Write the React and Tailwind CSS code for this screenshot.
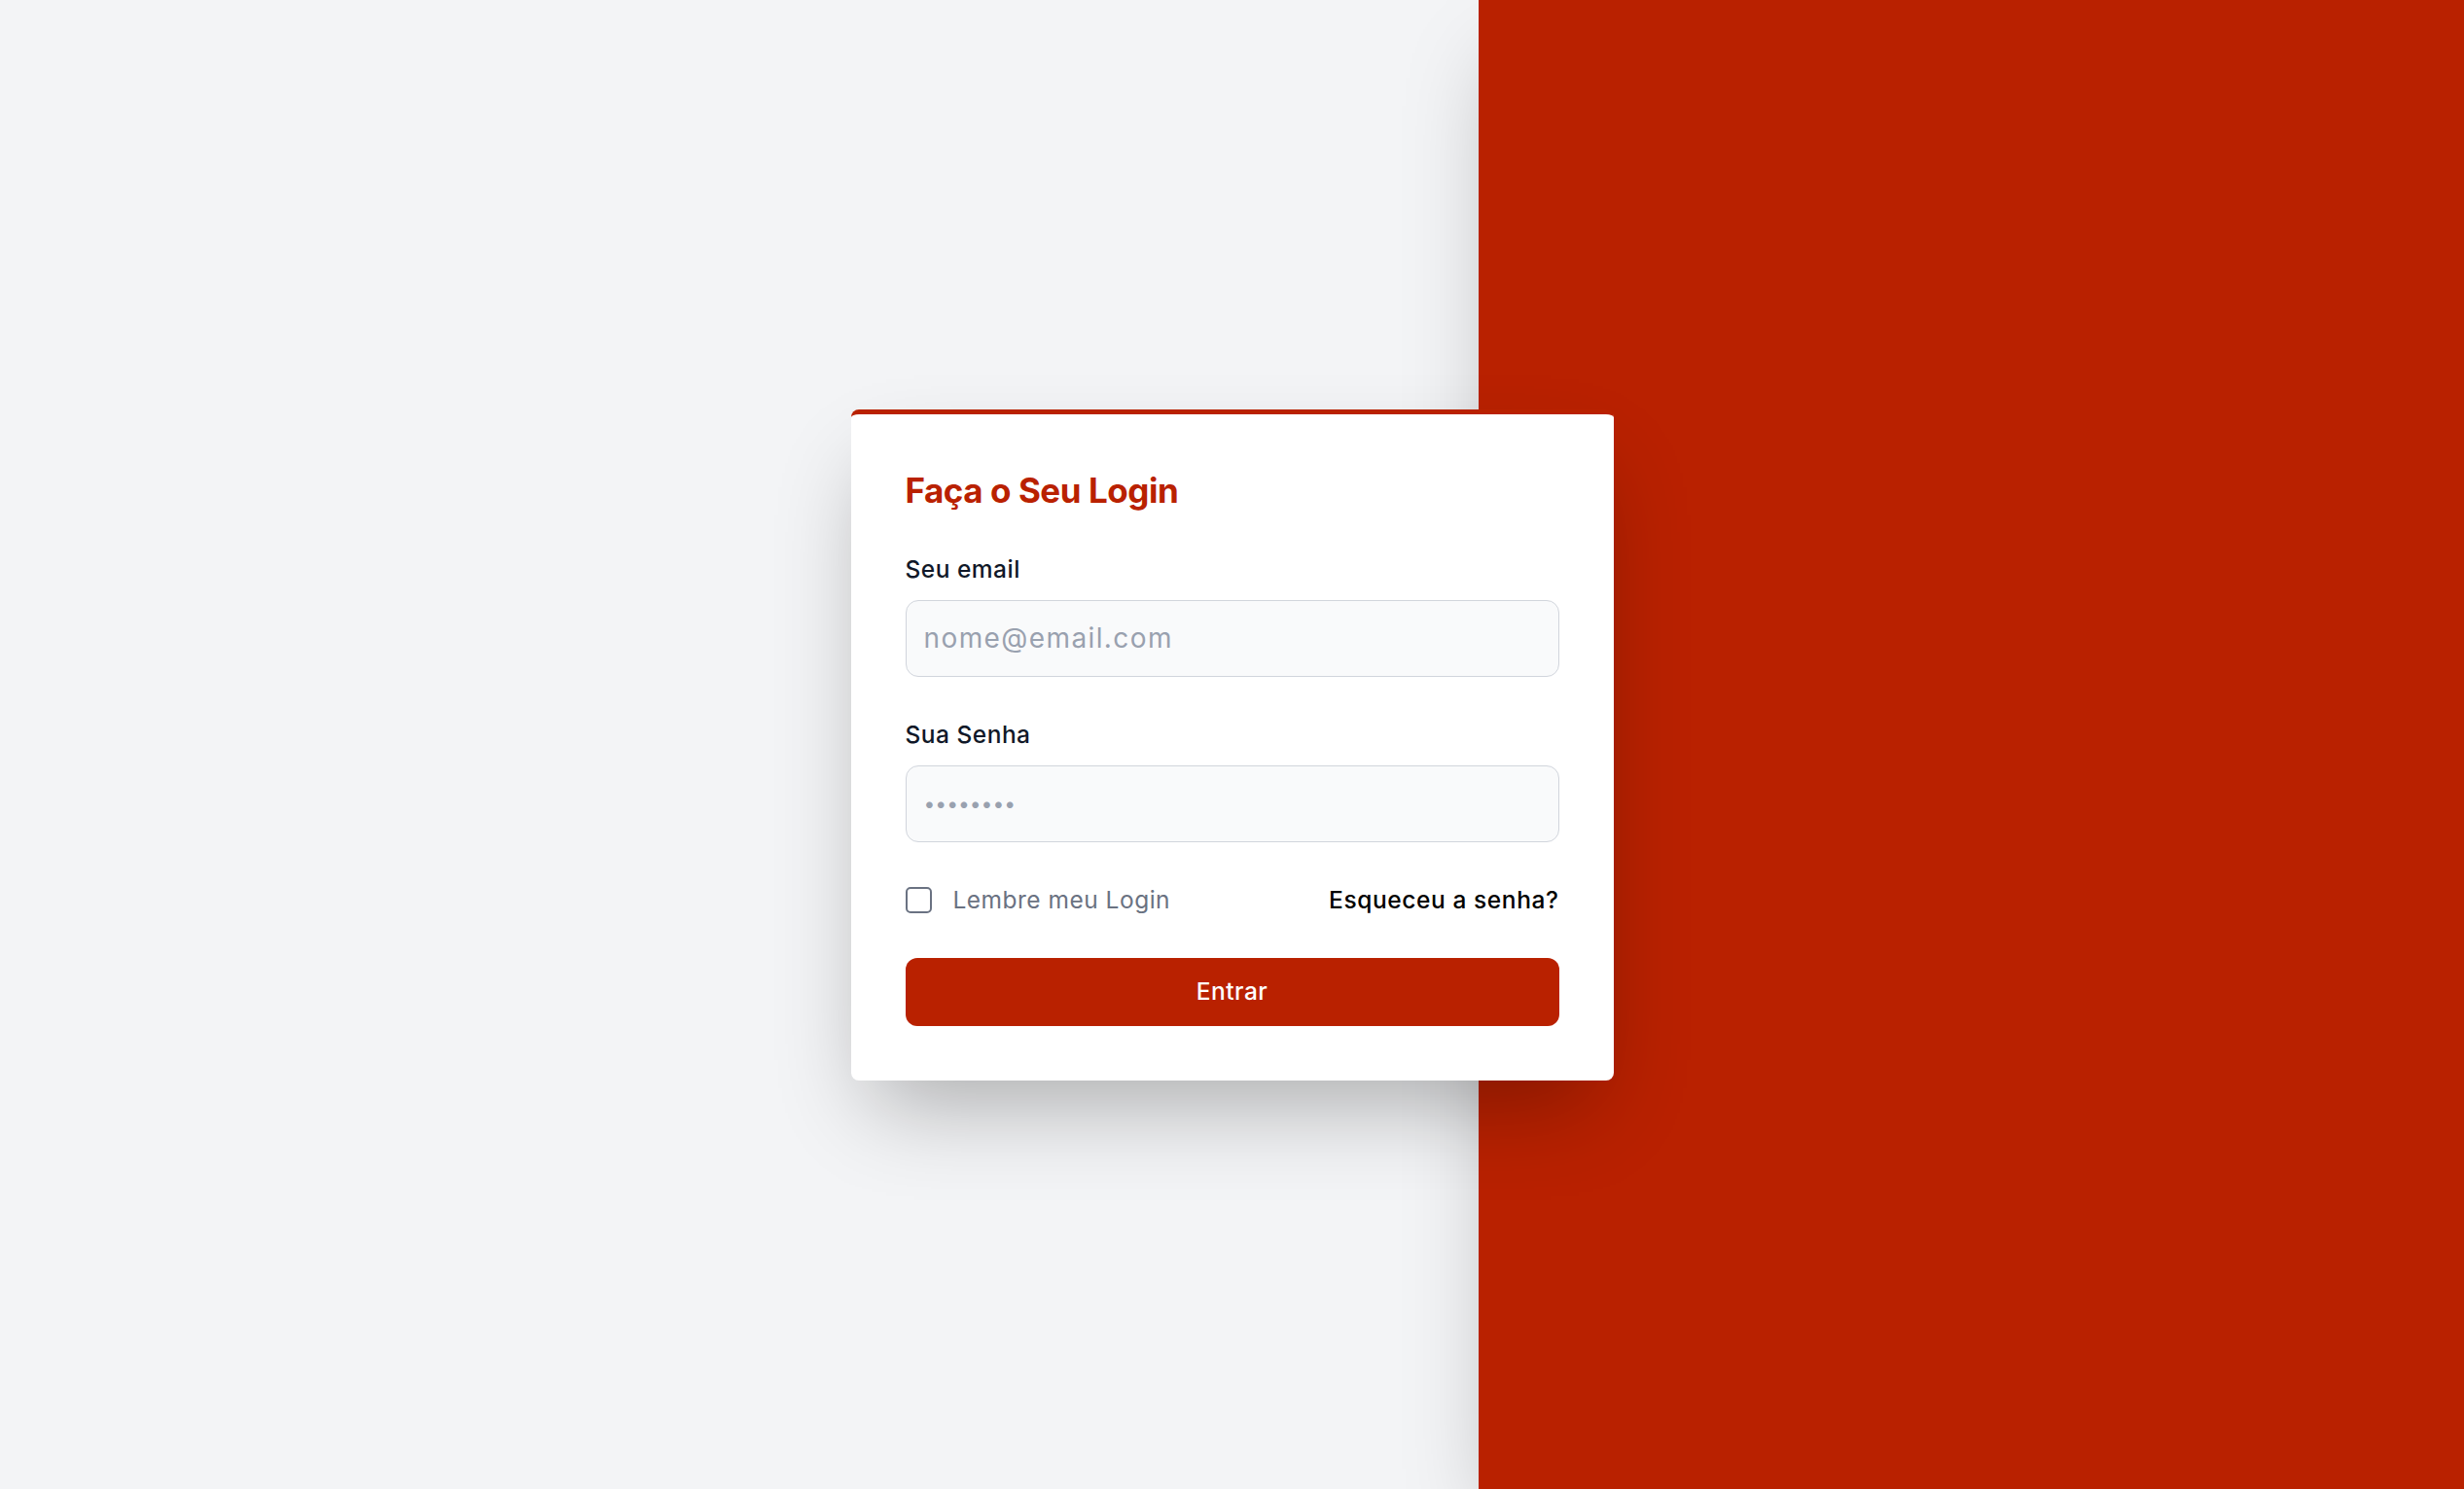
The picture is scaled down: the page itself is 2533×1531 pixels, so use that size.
import { useState } from 'react';

const RED = 'bg-[#b92100]';

const LoginCard = () => {
    const [remember, setRemember] = useState(false);

    return (
        <div className="w-[784px] bg-white rounded-[8px] border-t-[5px] border-[#b92100] px-[56px] pt-[56px] pb-[56px] shadow-[0_44px_88px_-21px_rgba(0,0,0,0.3)] flex flex-col gap-[42px]">
            <h1 className="text-[35px] leading-[44px] font-bold tracking-[-0.013em] text-[#b92100]">
                Faça o Seu Login
            </h1>

            {/* Email */}
            <div className="flex flex-col">
                <label htmlFor="email" className="text-[24.5px] leading-[35px] font-medium tracking-[0.02em] text-gray-900 mb-[14px]">
                    Seu email
                </label>
                <input
                    id="email"
                    type="email"
                    placeholder="nome@email.com"
                    className="h-[79px] w-full bg-gray-50 border border-gray-300 rounded-[13px] px-[18px] text-[28px] tracking-[0.05em] text-gray-900 placeholder:text-gray-400 outline-none"
                />
            </div>

            {/* Password */}
            <div className="flex flex-col">
                <label htmlFor="password" className="text-[24.5px] leading-[35px] font-medium tracking-[0.02em] text-gray-900 mb-[14px]">
                    Sua Senha
                </label>
                <input
                    id="password"
                    type="password"
                    placeholder="••••••••"
                    className="h-[79px] w-full bg-gray-50 border border-gray-300 rounded-[13px] px-[18px] text-[21px] text-gray-900 placeholder:text-gray-400 outline-none"
                />
            </div>

            <div className="flex items-center justify-between h-[35px]">
                <label className="flex items-center gap-[22px] cursor-pointer">
                    <input
                        type="checkbox"
                        checked={remember}
                        onChange={() => setRemember(!remember)}
                        className="appearance-none w-[27px] h-[27px] border-2 border-gray-500 rounded-[5px] bg-white"
                    />
                    <span className="text-[24.5px] leading-[35px] tracking-[0.02em] text-gray-500">Lembre meu Login</span>
                </label>
                <a href="#" className="text-[24.5px] leading-[35px] font-medium tracking-[0.024em] text-black">
                    Esqueceu a senha?
                </a>
            </div>

            <button className={`h-[70px] w-full ${RED} rounded-[12px] text-white text-[24.5px] font-medium tracking-[0.02em]`}>
                Entrar
            </button>
        </div>
    );
};

export default function App() {
    return (
        <div className="grid h-screen w-full overflow-hidden font-['Inter','Noto_Sans',sans-serif]">
            {/* Split background */}
            <div className="col-start-1 row-start-1 flex">
                <div className="w-3/5 bg-gray-100" />
                <div className="w-2/5 bg-[#b92100] shadow-[0_44px_88px_-21px_rgba(0,0,0,0.25)]" />
            </div>

            {/* Card */}
            <div className="col-start-1 row-start-1 flex items-center justify-center">
                <LoginCard />
            </div>
        </div>
    );
}
